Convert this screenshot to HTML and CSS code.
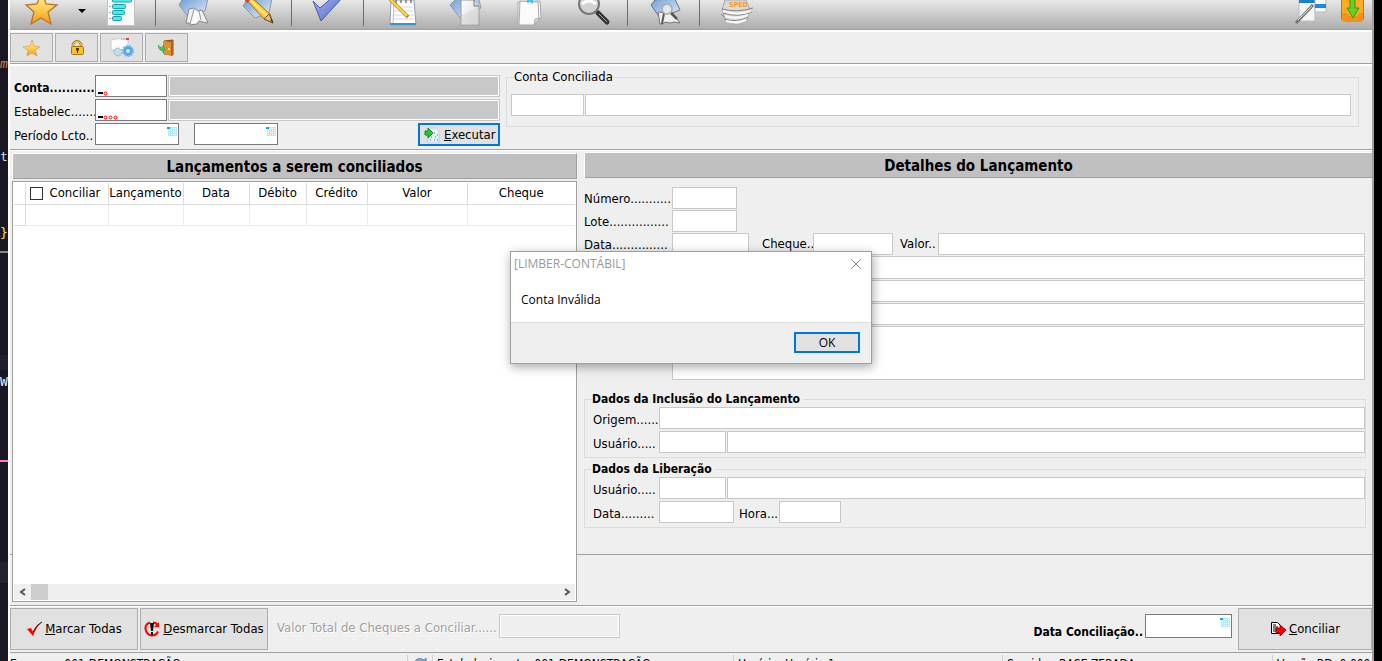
FILE: index.html
```html
<!DOCTYPE html>
<html lang="pt-BR">
<head>
<meta charset="utf-8">
<title>Conciliação de Lançamentos</title>
<link rel="stylesheet" href="styles.css">
</head>
<body>
<svg class="defs" aria-hidden="true">
  <defs>
    <linearGradient id="gold" x1="0" y1="0" x2="0" y2="1"><stop offset="0" stop-color="#fff3a8"/><stop offset=".5" stop-color="#fdd25a"/><stop offset="1" stop-color="#f59a10"/></linearGradient>
    <linearGradient id="blue" x1="0" y1="0" x2="1" y2="1"><stop offset="0" stop-color="#6f9cd4"/><stop offset=".5" stop-color="#a9c4e6"/><stop offset="1" stop-color="#e6f0fb"/></linearGradient>
    <linearGradient id="paper" x1="0" y1="0" x2="1" y2="1"><stop offset="0" stop-color="#ffffff"/><stop offset="1" stop-color="#d8d8d8"/></linearGradient>
    <linearGradient id="violet" x1="0" y1="0" x2="1" y2="1"><stop offset="0" stop-color="#a6b8fa"/><stop offset="1" stop-color="#4f62bd"/></linearGradient>
    <symbol id="calendar" viewBox="0 0 10 10"><path fill="#b5e9fa" d="M1 1h9v9H1z"/><path fill="#fff" d="M2 2h1v1H2zM4 2h1v1H4zM6 2h1v1H6zM8 2h1v1H8zM2 4h1v1H2zM4 4h1v1H4zM6 4h1v1H6zM8 4h1v1H8zM2 6h1v1H2zM4 6h1v1H4zM6 6h1v1H6zM8 6h1v1H8zM2 8h1v1H2zM4 8h1v1H4zM6 8h1v1H6zM8 8h1v1H8z"/><path fill="#16a5e8" d="M0 1h3v2H0z"/></symbol>
  </defs>
</svg>
<aside class="backdrop">
  <span class="code orange">m</span><span class="code pale">te</span><span class="code yellow">}</span>
  <i class="rule"></i><i class="band"></i><span class="code white">W</span><i class="rule pink"></i><i class="band low"></i>
</aside>
<main class="app">
  <nav class="toolbar" aria-label="Principal">
    <button aria-label="Favoritos"><svg width="36" height="29" viewBox="0 0 36 29"><path d="M19-9l4 13 11 1-9 7 3 12-10-6-10 6 3-12-8-7 11-1z" fill="url(#gold)" stroke="#b8742b" stroke-width="1.300"/></svg></button>
    <button aria-label="Abrir menu"><svg width="8" height="29"><path d="M0 9h8L4 13z"/></svg></button>
    <button aria-label="Lista"><svg width="36" height="29"><path fill="#fafafa" stroke="#c4c4c4" d="M3.500-2h27v27.500h-27z"/><g fill="#5fe0e4" stroke="#12a5b0"><rect x="8.500" y="-2" width="19" height="4" rx="1"/><rect x="8.500" y="4.500" width="13" height="4" rx="1"/><rect x="8.500" y="10.500" width="12" height="4" rx="1"/><rect x="8.500" y="16.500" width="9" height="4" rx="1"/></g><path stroke="#aaa" d="M5 6.500h2M5 12.500h2M5 18.500h2"/></svg></button>
    <span class="sep"></span>
    <button aria-label="Livro"><svg width="36" height="29"><path d="M8-2h25l-3 13-16 7-10-13z" fill="url(#blue)" stroke="#8b98a5"/><path d="M11 23l3-14 5-1 4 3 4-1 6 13-5-1-4-1-2 3-7 1-1-2z" fill="#f2f2f0" stroke="#888"/><path d="M19 9l-4 15M24 11l2 9" stroke="#989898" fill="none"/><path d="M20 10l-2 13h3l2-11z" fill="#fff"/></svg></button>
    <button aria-label="Editar"><svg width="36" height="29"><path d="M8-2h24l-3 15-14 5L3 6z" fill="url(#blue)" stroke="#8b98a5"/><path d="M6-1L10-4 30 14l3 9-9-4z" fill="#ffcc35" stroke="#a06c1c"/><path d="M9-1l18 17" stroke="#fff29c" stroke-width="1.500"/><path d="M24 19l5-5 4 9z" fill="#e3ba8b" stroke="#70502b"/><path d="M30 20l3 3-1-4z" fill="#432"/><path d="M4-1l3-3 4 3-4 4z" fill="#d33"/></svg></button>
    <span class="sep"></span>
    <button aria-label="Confirmar"><svg width="36" height="29"><path d="M4 1l7 7L25-4h10L12 21z" fill="url(#violet)" stroke="#4c5b9f" stroke-linejoin="round"/></svg></button>
    <span class="sep"></span>
    <button aria-label="Anotações"><svg width="36" height="29"><path d="M7 0h23l2 25H6z" fill="#fff" stroke="#8ba0b0"/><path d="M6 24h26" stroke="#3d94c7" stroke-width="2"/><path d="M9 7h20M9 11h20M9 15h21M9 19h21" stroke="#ccd8e5"/><path d="M10 1L9 23" stroke="#f1a6a6"/><path d="M12 0v3M17 0v3M22 0v3M27 0v3" stroke="#777" stroke-width="1.500"/><path d="M5-2l19 19" stroke="#b87619" stroke-width="3.500"/><path d="M5-2l18 18" stroke="#ffd239" stroke-width="2.500"/></svg></button>
    <button aria-label="Novo"><svg width="36" height="29"><path d="M8-1l22-3 3 12-20 11L2 5z" fill="url(#blue)" stroke="#8b98a5"/><path d="M13 0h13l5 6v19H13z" fill="url(#paper)" stroke="#999"/><path d="M26 0v6h5" fill="#ddd" stroke="#777"/><path d="M13 16L30 7v18H13z" fill="#ccc" opacity=".4"/></svg></button>
    <button aria-label="Prancheta"><svg width="36" height="29"><path d="M7 2l22-1 1 17-7 7-16-1z" fill="#fdfdfd" stroke="#aaa"/><path d="M9 1l18 1 1 18-5 5H8z" fill="#fafafa" stroke="#aaa"/><path d="M23 25l1-6 5-1z" fill="#ddd" stroke="#aaa"/><path d="M16-2l6 2v4l-3-2-3 1z" fill="#41c7e6"/></svg></button>
    <button aria-label="Pesquisar"><svg width="36" height="29"><path d="M22 13l9 9" stroke="#333" stroke-width="5" stroke-linecap="round"/><path d="M23 14l8 8" stroke="#aaa" stroke-width="1"/><circle cx="13" cy="4" r="10" fill="#d2d2d2" stroke="#777" stroke-width="2"/><path d="M6 4q7-6 14 0" stroke="#fff" stroke-width="3" fill="none"/></svg></button>
    <span class="sep"></span>
    <button aria-label="Consultar"><svg width="36" height="29"><path d="M10 0l19-3 6 13-20 8L6 5z" fill="url(#blue)" stroke="#68747f"/><path d="M15 24l-2-12 8 1 5-2 9 12-6-1-4 1-5-1-2 2z" fill="#eee" stroke="#777"/><path d="M19 13l-2 11" stroke="#655" stroke-width="2"/><path d="M26 13l6 6" stroke="#555" stroke-width="2.500"/><circle cx="22" cy="9" r="5" fill="#dfe8ee" stroke="#aaa" stroke-width="1.500"/></svg></button>
    <span class="sep"></span>
    <button aria-label="SPED"><svg width="36" height="29"><path d="M6 0h21l4 10-3 11-10 4-11-4L3 10z" fill="#d9d9d9" stroke="#aaa"/><path d="M3 9q15 4 31-1M4 13q15 5 29-1M5 19q13 4 24-2M2 14l3 3" fill="none" stroke="#888"/><path d="M4 11q14 5 28 0M6 16q12 4 23-1M7 21q11 3 20-1" fill="none" stroke="#f7f7f7" stroke-width="2"/><text x="10" y="7" class="sped">SPED</text></svg></button>
    <span></span>
    <button aria-label="Janelas"><svg width="36" height="29"><path d="M6-1h16v22H6z" fill="#f5f5f5" stroke="#bbb"/><path d="M6 0h16v3H6z" fill="#197fd3"/><path d="M22-1h11v13H22z" fill="#f6f6f6" stroke="#bbb"/><path d="M22 4h11v4H22z" fill="#168ce1"/><path d="M3 23L20 5" stroke="#777" stroke-width="3"/><path d="M5 20L19 6" stroke="#ddd"/></svg></button>
    <button aria-label="Baixar"><svg width="26" height="29"><rect x="1.500" y="-4" width="22" height="25" rx="3" fill="#ffac24" stroke="#ca7410"/><path d="M2 13h5l2 3h8l2-3h4v8H2z" fill="#f59018"/><path d="M10-2h5v10h4l-6 10L7 8h3z" fill="#68cf20" stroke="#3f9612"/></svg></button>
  </nav>
  <nav class="quickbar" aria-label="Atalhos">
    <button aria-label="Favorito"><svg width="20" height="20"><path d="M10 2l2 6 6 1-5 3 2 6-5-3-5 3 1-6-5-3 7-1z" fill="url(#gold)" stroke="#dc9e43" stroke-width=".7"/></svg></button>
    <button aria-label="Bloquear"><svg width="20" height="20"><path d="M6 10V6q4-6 8 0v4" fill="none" stroke="#a8740c" stroke-width="2.500"/><path d="M6 9V6q4-5 8 0v3" fill="none" stroke="#ffe680"/><rect x="4.500" y="8.500" width="12" height="8" rx="1" fill="#f5c230" stroke="#a8740c"/><path d="M9 10h3v2l-1 1v2h-1v-2l-1-1z" fill="#533900"/></svg></button>
    <button aria-label="Configurar"><svg width="26" height="22"><path d="M2 3q5-2 17-1v11H2z" fill="#fafafa" stroke="#ccc"/><path d="M12 1h8v2h-8z" fill="#c7cad8"/><path d="M17 1h3v2h-3z" fill="#d45"/><circle cx="9" cy="15" r="4" fill="#c5dbe5" stroke="#8eacb9" stroke-dasharray="2 1"/><circle cx="19" cy="14" r="5" fill="#4da4ed" stroke="#78b8ee" stroke-width="2" stroke-dasharray="2 1"/><circle cx="19" cy="14" r="2" fill="#d7edfc"/></svg></button>
    <button aria-label="Sair"><svg width="20" height="20"><path d="M7 3l9-1v15l-9-1z" fill="#8c541b" stroke="#8b5411"/><path d="M7 3l7 1v14l-7-2z" fill="#dc9135"/><path d="M14 4l2-2v15l-2 1z" fill="#a9661d"/><circle cx="12" cy="11" r="1" fill="#ffe290"/><path d="M1 7q2 3 5 2V7l2 5-2 3v-2Q2 13 1 7z" fill="#3ccb40" stroke="#269f31" stroke-width=".5"/></svg></button>
  </nav>

  <section class="filters">
    <div class="filter-form">
      <div class="row"><label class="strong" for="conta">Conta...........</label><span class="field code-field"><input id="conta"><svg width="30" height="6"><path fill="#000" d="M0 2h5v2H0z"/><circle class="ring" cx="7.500" cy="3.500" r="1.500"/></svg></span><output class="name"></output></div>
      <div class="row"><label for="estab">Estabelec.......</label><span class="field code-field"><input id="estab"><svg width="30" height="6"><path fill="#000" d="M0 2h5v2H0z"/><g class="ring"><circle cx="7.500" cy="3.500" r="1.500"/><circle cx="12.500" cy="3.500" r="1.500"/><circle cx="17.500" cy="3.500" r="1.500"/></g></svg></span><output class="name"></output></div>
      <div class="row"><label for="inicio">Período Lcto..</label><span class="field date-field"><input id="inicio"><svg width="10" height="10"><use href="#calendar"/></svg></span><span class="field date-field until"><input aria-label="Período final"><svg width="10" height="10"><use href="#calendar"/></svg></span>
        <button class="run"><svg width="16" height="16"><path d="M4 1h8l3 3v12H4z" fill="#e6effa" stroke="#c3cfdf"/><path d="M6 7h1M10 6h1M7 10h1M11 10h1M6 13h1M10 13h1M13 8h1M13 13h1" stroke="#556e93"/><path d="M1 4h3V1l5 5-5 5V8H1z" fill="#25c82d" stroke="#128a1c"/></svg><span><u>E</u>xecutar</span></button></div>
    </div>
    <fieldset class="settled"><legend>Conta Conciliada</legend><div class="pair"><input class="soft w73" aria-label="Código da conta"><input class="soft grow" aria-label="Nome da conta"></div></fieldset>
  </section>

  <section class="work">
    <div class="gutter"></div>
    <div class="list">
      <h2>Lançamentos a serem conciliados</h2>
      <div class="grid-box">
        <table>
          <colgroup><col class="c0"><col class="c1"><col class="c2"><col class="c3"><col class="c4"><col class="c5"><col class="c6"><col></colgroup>
          <thead><tr><th></th><th><label class="check"><input type="checkbox">Conciliar</label></th><th>Lançamento</th><th>Data</th><th>Débito</th><th>Crédito</th><th>Valor</th><th>Cheque</th></tr></thead>
          <tbody><tr><td></td><td></td><td></td><td></td><td></td><td></td><td></td><td></td></tr></tbody>
        </table>
        <div class="scroll"><button aria-label="Rolar à esquerda"><svg width="8" height="8"><path d="M6 1L2 4l4 3"/></svg></button><i></i><button class="end" aria-label="Rolar à direita"><svg width="8" height="8"><path d="M2 1l4 3-4 3"/></svg></button></div>
      </div>
    </div>
    <div class="details">
      <h2>Detalhes do Lançamento</h2>
      <div class="entry">
        <div class="row"><label for="numero">Número...........</label><input class="soft w65" id="numero"></div>
        <div class="row"><label for="lote">Lote................</label><input class="soft w65" id="lote"></div>
        <div class="row"><label for="data">Data...............</label><input class="soft w77" id="data"><label class="cheque" for="cheque">Cheque..</label><input class="soft w80" id="cheque"><label class="valor" for="valor">Valor..</label><input class="soft grow" id="valor"></div>
        <div class="row inset"><input class="soft grow tall-line" aria-label="Conta débito"></div>
        <div class="row inset"><input class="soft grow" aria-label="Conta crédito"></div>
        <div class="row inset"><input class="soft grow" aria-label="Histórico"></div>
        <div class="row inset"><textarea class="soft grow" aria-label="Complemento"></textarea></div>
      </div>
      <fieldset class="audit"><legend>Dados da Inclusão do Lançamento</legend>
        <div class="row"><label for="origem">Origem......</label><input class="soft grow" id="origem"></div>
        <div class="row"><label for="usuario1">Usuário.....</label><input class="soft w67" id="usuario1"><input class="soft grow" aria-label="Nome do usuário"></div>
      </fieldset>
      <fieldset class="audit"><legend>Dados da Liberação</legend>
        <div class="row"><label for="usuario2">Usuário.....</label><input class="soft w67" id="usuario2"><input class="soft grow" aria-label="Nome de quem liberou"></div>
        <div class="row"><label for="data2">Data.........</label><input class="soft w75" id="data2"><label class="hora" for="hora">Hora...</label><input class="soft w62" id="hora"></div>
      </fieldset>
    </div>
  </section>

  <footer class="actions">
    <button class="big"><svg width="16" height="16"><path d="M1 8l4-1 2 4q3-7 9-10Q10 6 7 15z" fill="#f00"/><path d="M7 11q4-8 9-10" stroke="#500" fill="none"/></svg><span><u>M</u>arcar Todas</span></button>
    <button class="big"><svg width="16" height="16"><path d="M6 1.500Q1 3 1.500 8q1 6 6.500 6.500 4 0 6-4M9 1.500q3 0 5 3" fill="none" stroke="#f00" stroke-width="2"/><path d="M15 1v5h-5z" fill="#f00"/><path d="M6 2h4L9 10H7zM7 11h2v3H7z" fill="#111"/></svg><span><u>D</u>esmarcar Todas</span></button>
    <label class="total-label" for="total">Valor Total de Cheques a Conciliar......</label><input class="total" id="total" disabled>
    <label class="strong when" for="quando">Data Conciliação..</label><span class="field date-field tall"><input id="quando"><svg width="10" height="10"><use href="#calendar"/></svg></span>
    <button class="big settle"><svg width="16" height="16"><path d="M1.500 1.500h6l3 3v8h-9z" fill="#fff" stroke="#000"/><path d="M3 4h3M3 6h5M3 8h3M3 10h3" stroke="#000"/><path d="M6 7h4V4l6 5-6 6v-3H6z" fill="#f00" stroke="#400" stroke-width=".7"/></svg><span><u>C</u>onciliar</span></button>
  </footer>
  <div class="status">
    <span class="s1">Empresa: 001-DEMONSTRAÇÃO</span><span class="s2"><svg width="16" height="12"><path d="M2 6Q5-1 12 3l2-2v6H8l2-2Q6 3 4 8z" fill="#7fa7d8" stroke="#5d86ba"/></svg></span><span class="s3">Estabelecimento: 001-DEMONSTRAÇÃO</span><span class="s4">Horário: Horário 1</span><span class="s5">Servidor: BASE ZERADA</span><span class="s6">Versão BD: 0.000</span>
  </div>
</main>
<div class="dialog" role="alertdialog" aria-labelledby="dlg-title">
  <div class="dialog-title"><span id="dlg-title">[LIMBER-CONTÁBIL]</span><button aria-label="Fechar"><svg width="12" height="12"><path d="M1 1l10 10M11 1L1 11" stroke="#888"/></svg></button></div>
  <p>Conta Inválida</p>
  <div class="dialog-foot"><button>OK</button></div>
</div>
</body>
</html>
```

FILE: styles.css
```css
* { box-sizing: border-box; }
html { height: 100%; overflow: hidden; }
body {
  margin: 0;
  height: 100%;
  overflow: hidden;
  display: flex;
  align-items: flex-start;
  background: #000;
  color: #000;
  font: 13px/16px "DejaVu Sans Condensed", "DejaVu Sans", sans-serif;
}
input, button, textarea { font: inherit; color: inherit; margin: 0; min-width: 0; }
h2, p, fieldset { margin: 0; }
fieldset { min-width: 0; padding: 0; border: 1px solid #dcdcdc; }
legend { padding: 0; }
svg { display: block; flex: none; }
.defs { position: absolute; width: 0; height: 0; }

.backdrop { width: 8px; height: 100vh; flex: none; overflow: hidden; background: #1a1722; display: flex; flex-direction: column; font: 13px/16px "DejaVu Sans Mono", monospace; }
.backdrop > * { flex: none; }
.code { height: 16px; }
.orange { margin-top: 56px; color: #d8773e; font-style: italic; }
.pale { margin-top: 77px; color: #d5d5e5; }
.yellow { margin-top: 60px; color: #f1e45b; }
.rule { margin-top: 10px; height: 2px; background: #888; }
.band { margin-top: 102px; height: 15px; background: #211e30; }
.white { margin-top: 4px; color: #eee; }
.pink { margin-top: 70px; background: #ff79c6; }
.low { margin-top: 100px; height: 21px; background: #25222d; }

.app {
  flex: 1;
  min-width: 0;
  height: calc(100vh + 12px);
  margin-right: 8px;
  display: flex;
  flex-direction: column;
  background: #efefef;
  border-left: 2px solid #fff;
  border-right: 2px solid #a0a0a0;
}
.toolbar {
  height: 32px;
  flex: none;
  display: grid;
  grid-template-columns: 62px 20px 60px 6px 70px 60px 6px 66px 6px 72px 56px 70px 60px 6px 66px 6px 70px 1fr 46px 38px;
  grid-template-rows: 29px;
  background: linear-gradient(#e8e8e8, #adadad 29px, #a0a0a0 29px, #a0a0a0 30px, #fff 30px);
}
.toolbar button { padding: 0; border: 0; background: none; display: flex; justify-content: center; }
.sep { width: 1px; height: 26px; margin-left: 3px; background: #6d6d6d; }
.sped { font: bold 7px "DejaVu Sans Condensed", sans-serif; fill: #f39b35; }
.quickbar { flex: none; display: flex; gap: 2px; padding: 1px 0; border-bottom: 1px solid #a0a0a0; }
.quickbar button { width: 43px; height: 29px; padding: 0; border: 1px solid #adadad; background: #e1e1e1; display: flex; align-items: center; justify-content: center; }

.filters { flex: none; display: flex; gap: 6px; height: 86px; border-top: 2px solid #fff; border-bottom: 1px solid #a0a0a0; }
.filter-form { width: 490px; flex: none; display: flex; flex-direction: column; gap: 2px; padding: 9px 0 0 4px; }
.row { display: flex; }
.row label { flex: none; white-space: nowrap; overflow: hidden; padding-top: 3px; }
.filter-form label { width: 81px; padding-top: 5px; }
.strong, .audit legend { font-weight: bold; font-size: 12px; }
.field { position: relative; flex: none; height: 22px; border: 1px solid #7a7a7a; background: #fff; }
.field input { display: block; width: 100%; height: 100%; border: 0; padding: 0 2px; background: none; outline: 0; }
.field svg { position: absolute; }
.code-field { width: 72px; }
.code-field svg { left: 2px; bottom: 0; }
.ring { fill: #fff; stroke: #f00; }
.date-field { width: 84px; }
.date-field svg { right: 1px; top: 2px; }
.until { margin-left: 15px; }
.name { flex: 1; margin-left: 1px; border: 1px solid #c8c8c8; background: #c8c8c8; box-shadow: inset 0 0 0 1px #fff; }
.run { width: 82px; height: 23px; margin-left: auto; padding: 0 0 0 4px; border: 2px solid #0078d7; background: #e1e1e1; display: flex; align-items: center; gap: 4px; }
.settled { flex: 1; height: 58px; margin: 3px 13px 0 0; }
.settled legend { margin-left: 7px; }
.pair { display: flex; gap: 1px; padding: 9px 7px 0 4px; }
.soft { height: 22px; flex: none; border: 1px solid #c8c8c8; border-radius: 0; background: #fff; padding: 0 2px; }
.grow { flex: 1; }
.w62 { width: 62px; }
.w65 { width: 65px; }
.w67 { width: 67px; }
.w73 { width: 73px; }
.w75 { width: 75px; }
.w77 { width: 77px; }
.w80 { width: 80px; }

.work { flex: 1; min-height: 0; display: grid; grid-template-columns: 2px minmax(0, 565fr) minmax(0, 795fr); grid-template-rows: auto 1fr; border-top: 1px solid #fff; }
.gutter { border-bottom: 1px solid #a0a0a0; }
.list { grid-row: 1 / 3; grid-column: 2; display: flex; flex-direction: column; gap: 2px; padding: 2px 0 3px; }
h2 { height: 26px; flex: none; border: solid #fff; border-width: 1px 0 0 1px; box-shadow: inset 0 -1px #a0a0a0; background: #c0c0c0; text-align: center; font-size: 15px; line-height: 26px; }
.list h2 { border-right: 1px solid #a0a0a0; }
.grid-box { flex: 1; display: flex; flex-direction: column; border: 1px solid #a0a0a0; background: #fff; padding: 1px; }
table { table-layout: fixed; width: 100%; border-collapse: collapse; }
th, td { height: 21px; padding: 0; border: solid #ececec; border-width: 0 1px 1px 0; font-weight: normal; white-space: nowrap; text-align: center; }
th { border-color: #dcdcdc; }
td:first-child { border-color: #dcdcdc; }
tr > :last-child { border-right: 0; }
.c0 { width: 11px; }
.c1 { width: 83px; }
.c2 { width: 75px; }
.c3 { width: 66px; }
.c4 { width: 57px; }
.c5 { width: 61px; }
.c6 { width: 100px; }
.check { display: flex; align-items: center; gap: 7px; padding-left: 4px; }
.check input { appearance: none; flex: none; width: 13px; height: 13px; border: 1px solid #333; background: #fff; }
.scroll { height: 16px; margin-top: auto; display: flex; background: #efefef; }
.scroll button { width: 17px; padding: 0; border: 0; background: none; display: flex; align-items: center; justify-content: center; }
.scroll path { fill: none; stroke: #555; stroke-width: 2; }
.scroll i { width: 17px; background: #cdcdcd; }
.scroll .end { margin-left: auto; }

.details { padding: 1px 0 21px 7px; border-bottom: 1px solid #a0a0a0; }
.entry { display: flex; flex-direction: column; gap: 1px; padding: 9px 7px 13px 0; }
.entry .row > label:first-child { width: 88px; padding-top: 4px; }
.entry .cheque { width: 64px; padding-left: 13px; }
.entry .valor { width: 45px; padding-left: 7px; }
.inset { padding-left: 88px; }
.tall-line { height: 23px; }
textarea.soft { height: 54px; resize: none; display: block; }
.audit { margin: 0 6px 5px 0; padding-bottom: 4px; display: block; }
.audit legend { margin-left: 7px; line-height: 12px; padding-right: 3px; }
.audit .row { gap: 1px; margin-top: 2px; padding-left: 8px; }
.audit .row > label { width: 65px; padding-top: 5px; }
.audit .row > .hora { width: 43px; padding-left: 4px; }

.actions { flex: none; height: 48px; display: flex; gap: 2px; padding: 2px 0; border-top: 1px solid #a0a0a0; border-bottom: 1px solid #a0a0a0; box-shadow: inset 0 1px #fff; }
.big { width: 128px; flex: none; padding: 0; border: 1px solid #adadad; background: #e1e1e1; display: flex; align-items: center; justify-content: center; gap: 3px; white-space: nowrap; }
.total-label { width: 227px; padding: 12px 0 0 7px; color: #a0a0a0; text-shadow: 1px 1px #fff; white-space: nowrap; }
.total { width: 121px; height: 24px; margin-top: 6px; border: 1px solid #c8c8c8; box-shadow: inset 0 0 0 1px #fff; background: #efefef; }
.when { margin-left: auto; padding-top: 16px; }
.tall { width: 87px; height: 24px; margin-top: 6px; }
.settle { width: 134px; margin-left: 4px; }
.status { height: 20px; flex: none; display: flex; font-size: 12px; line-height: 14px; padding-top: 2px; }
.status span { flex: none; white-space: nowrap; padding: 2px 0 0 4px; border-left: 1px solid #d0d0d0; }
.status .s1 { width: 397px; padding-left: 0; border: 0; }
.status .s2 { width: 25px; }
.status .s3 { width: 301px; }
.status .s4 { width: 269px; }
.status .s5 { flex: 1; }
.status .s6 { width: 100px; }

.dialog { position: absolute; left: calc(50% - 181px); top: 251px; width: 362px; background: #fff; border: 1px solid #a0a0a0; box-shadow: 1px 3px 10px rgba(0, 0, 0, .35); font: 12px/16px "Open Sans", sans-serif; }
.dialog-title { display: flex; justify-content: space-between; padding: 4px 9px 0 3px; color: #999; }
.dialog-title button { padding: 0; border: 0; background: none; }
.dialog p { padding: 20px 10px 14px; }
.dialog-foot { display: flex; justify-content: flex-end; padding: 9px 11px 10px; border-top: 1px solid #dfdfdf; background: #efefef; }
.dialog-foot button { width: 66px; height: 21px; padding: 0; border: 2px solid #0078d7; background: #e1e1e1; line-height: 16px; }
```
